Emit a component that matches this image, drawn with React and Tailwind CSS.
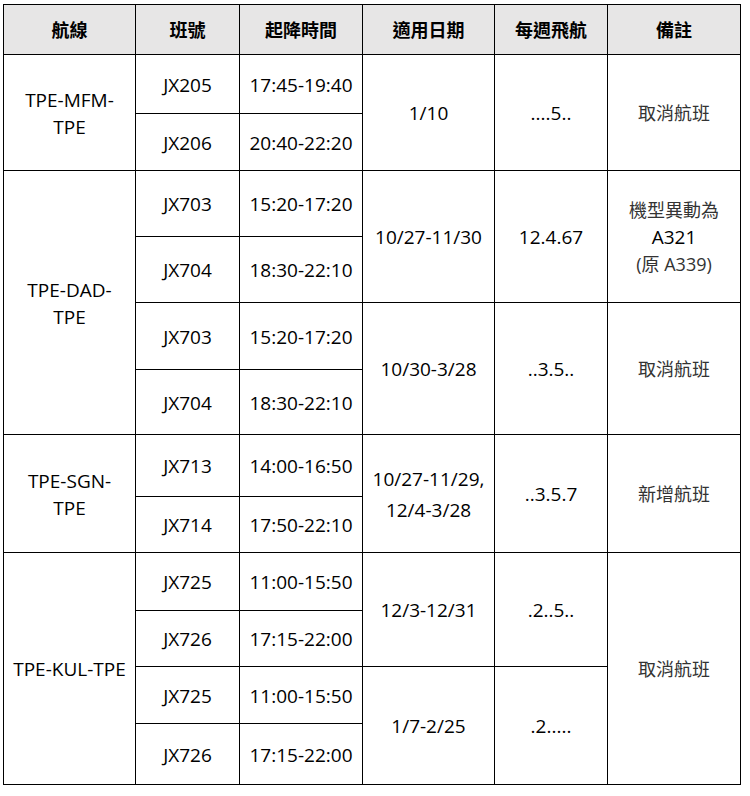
import React from "react";

const font = { fontFamily: '"Open Sans", "Noto Sans CJK TC", sans-serif' };

function Td({ children, rowSpan, className = "" }) {
    return (
        <td rowSpan={rowSpan} className={`border border-black text-center align-middle px-1 pt-[2px] ${className}`}>
            {children}
        </td>
    );
}

function Note({ children, rowSpan }) {
    return (
        <Td rowSpan={rowSpan} className="text-[#333] text-[18px] leading-[27px]">
            {children}
        </Td>
    );
}

export default function App() {
    return (
        <div className="bg-white w-[750px] h-[796px] pt-[4px] pl-[3px]" style={font}>
            <table className="table-fixed border-collapse w-[737px] text-[19px] text-black">
                <colgroup>
                    <col className="w-[132px]" />
                    <col className="w-[104px]" />
                    <col className="w-[123px]" />
                    <col className="w-[132px]" />
                    <col className="w-[113px]" />
                    <col className="w-[133px]" />
                </colgroup>
                <thead>
                    <tr className="h-[50px] bg-[#e7e6e6] font-bold text-[18px]">
                        <Td>航線</Td>
                        <Td>班號</Td>
                        <Td>起降時間</Td>
                        <Td>適用日期</Td>
                        <Td>每週飛航</Td>
                        <Td>備註</Td>
                    </tr>
                </thead>
                <tbody>
                    {/* TPE-MFM-TPE */}
                    <tr className="h-[59px]">
                        <Td rowSpan={2} className="leading-[27px]">TPE-MFM-<br />TPE</Td>
                        <Td>JX205</Td>
                        <Td>17:45-19:40</Td>
                        <Td rowSpan={2}>1/10</Td>
                        <Td rowSpan={2}>....5..</Td>
                        <Note rowSpan={2}>取消航班</Note>
                    </tr>
                    <tr className="h-[57px]">
                        <Td>JX206</Td>
                        <Td>20:40-22:20</Td>
                    </tr>

                    {/* TPE-DAD-TPE */}
                    <tr className="h-[66px]">
                        <Td rowSpan={4} className="leading-[27px]">TPE-DAD-<br />TPE</Td>
                        <Td>JX703</Td>
                        <Td>15:20-17:20</Td>
                        <Td rowSpan={2}>10/27-11/30</Td>
                        <Td rowSpan={2}>12.4.67</Td>
                        <Note rowSpan={2}>
                            機型異動為<br />
                            <span className="text-black text-[19px]">A321</span><br />
                            (原 A339)
                        </Note>
                    </tr>
                    <tr className="h-[66px]">
                        <Td>JX704</Td>
                        <Td>18:30-22:10</Td>
                    </tr>
                    <tr className="h-[67px]">
                        <Td>JX703</Td>
                        <Td>15:20-17:20</Td>
                        <Td rowSpan={2}>10/30-3/28</Td>
                        <Td rowSpan={2}>..3.5..</Td>
                        <Note rowSpan={2}>取消航班</Note>
                    </tr>
                    <tr className="h-[65px]">
                        <Td>JX704</Td>
                        <Td>18:30-22:10</Td>
                    </tr>

                    {/* TPE-SGN-TPE */}
                    <tr className="h-[62px]">
                        <Td rowSpan={2} className="leading-[27px]">TPE-SGN-<br />TPE</Td>
                        <Td>JX713</Td>
                        <Td>14:00-16:50</Td>
                        <Td rowSpan={2} className="leading-[31px]">10/27-11/29,<br />12/4-3/28</Td>
                        <Td rowSpan={2}>..3.5.7</Td>
                        <Note rowSpan={2}>新增航班</Note>
                    </tr>
                    <tr className="h-[56px]">
                        <Td>JX714</Td>
                        <Td>17:50-22:10</Td>
                    </tr>

                    {/* TPE-KUL-TPE */}
                    <tr className="h-[58px]">
                        <Td rowSpan={4}>TPE-KUL-TPE</Td>
                        <Td>JX725</Td>
                        <Td>11:00-15:50</Td>
                        <Td rowSpan={2}>12/3-12/31</Td>
                        <Td rowSpan={2}>.2..5..</Td>
                        <Note rowSpan={4}>取消航班</Note>
                    </tr>
                    <tr className="h-[56px]">
                        <Td>JX726</Td>
                        <Td>17:15-22:00</Td>
                    </tr>
                    <tr className="h-[57px]">
                        <Td>JX725</Td>
                        <Td>11:00-15:50</Td>
                        <Td rowSpan={2}>1/7-2/25</Td>
                        <Td rowSpan={2}>.2.....</Td>
                    </tr>
                    <tr className="h-[61px]">
                        <Td>JX726</Td>
                        <Td>17:15-22:00</Td>
                    </tr>
                </tbody>
            </table>
        </div>
    );
}
